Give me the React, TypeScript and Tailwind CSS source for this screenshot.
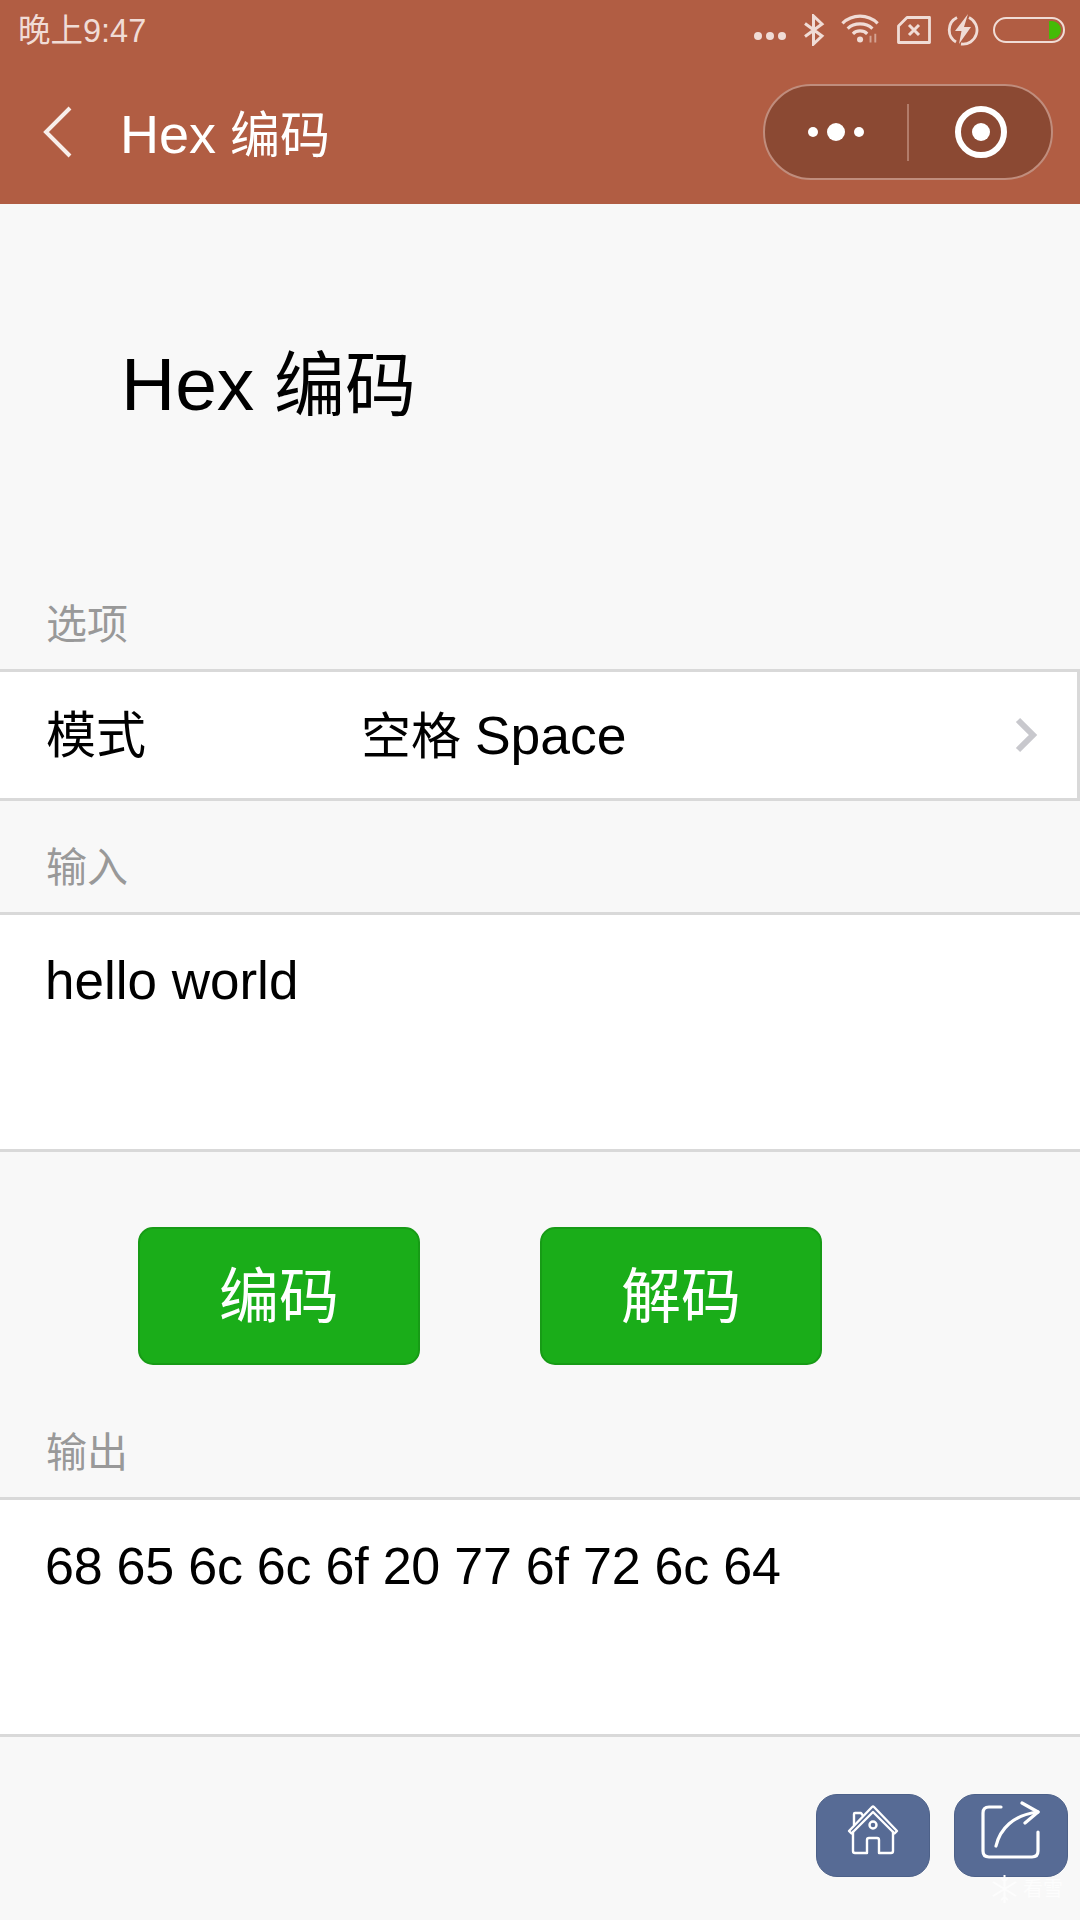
import type { ReactNode } from "react";

const FONT = "font-['Liberation_Sans','Noto_Sans_CJK_SC',sans-serif]";

function StatusIcons() {
	return (
		<div className="flex items-center text-[#f0dcd6]">
			<div className="flex gap-[4px] mt-[11px] mr-[17px]">
				<span className="w-2 h-2 rounded-full bg-[#f0dcd6]" />
				<span className="w-2 h-2 rounded-full bg-[#f0dcd6]" />
				<span className="w-2 h-2 rounded-full bg-[#f0dcd6]" />
			</div>
			<svg width="22" height="32" viewBox="0 0 22 32" fill="none" stroke="currentColor" strokeWidth="3" className="mr-[16px]">
				<path d="M2 9.5 L19 22 L10.5 30 V2 L19 10 L2 22.5" />
			</svg>
			<svg width="40" height="32" viewBox="0 0 42 32" fill="none" stroke="currentColor" className="mr-[16px]">
				<path d="M1.5 9 C12 -1 28 -1 38.5 9" strokeWidth="3.4" />
				<path d="M7 14.5 C14 8 26 8 33 14.5" strokeWidth="3.4" />
				<path d="M12.5 20 C16.5 16 23.5 16 27.5 20" strokeWidth="3.4" />
				<circle cx="20" cy="26" r="3.2" fill="currentColor" stroke="none" />
				<path d="M31 22 V29 M36 20 V29" strokeWidth="2" opacity="0.55" />
			</svg>
			<svg width="34" height="28" viewBox="0 0 34 28" fill="none" stroke="currentColor" strokeWidth="2.8" className="mr-[16px]">
				<path d="M10 1.5 H32.5 V26.5 H1.5 V10 Z" strokeLinejoin="round" />
				<path d="M12 9 L22 19 M22 9 L12 19" strokeWidth="3" />
			</svg>
			<svg width="32" height="32" viewBox="0 0 32 32" fill="none" className="mr-[14px]">
				<path d="M10 3.5 A14 14 0 0 0 9 28 M22 3.5 A14 14 0 0 1 14 30" stroke="currentColor" strokeWidth="2.8" />
				<path d="M21 0 L8 17 H14.5 L12 30 L24 13 H17 Z" fill="currentColor" />
			</svg>
			<div className="relative w-[72px] h-[26px] rounded-[13px] border-[2px] border-[#f0dcd6] overflow-hidden">
				<div className="absolute right-[2px] top-[2px] w-3 h-[18px] rounded-r-[9px] bg-[#45bb07]" />
			</div>
		</div>
	);
}

function Capsule() {
	return (
		<div className="flex items-center w-[290px] h-[96px] rounded-[48px] bg-[#8b4933] border-[2px] border-[#c08d7d]">
			<div className="flex flex-1 items-center justify-center gap-[9px] pr-[1px]">
				<span className="w-[10px] h-[10px] rounded-full bg-white" />
				<span className="w-[18px] h-[18px] rounded-full bg-white" />
				<span className="w-[10px] h-[10px] rounded-full bg-white" />
			</div>
			<div className="w-[2px] h-[57px] bg-[#b27c6a]" />
			<div className="flex flex-1 items-center justify-center pl-[1px]">
				<div className="flex items-center justify-center w-[52px] h-[52px] rounded-full border-[6px] border-white">
					<span className="w-[18px] h-[18px] rounded-full bg-white" />
				</div>
			</div>
		</div>
	);
}

function Header() {
	return (
		<div className="h-[204px] bg-[#b15d43] shrink-0">
			<div className="flex items-center justify-between h-[60px] pl-[18px] pr-[15px]">
				<span className="pt-[2px] text-[32.5px] leading-none text-[#f0dcd6]">晚上9:47</span>
				<StatusIcons />
			</div>
			<div className="flex items-center h-[144px] pl-[43px] pr-[27px]">
				<svg width="30" height="52" viewBox="0 0 30 52" fill="none" stroke="#f8eeea" strokeWidth="4" className="mr-[47px]">
					<path d="M27 2 L3 26 L27 50" />
				</svg>
				<span className="pt-[3px] text-[50px] leading-none text-white">
					<span className="text-[54px]">Hex</span> 编码
				</span>
				<div className="flex-1" />
				<Capsule />
			</div>
		</div>
	);
}

type SectionProps = {
	label: string;
	children: ReactNode;
};

function Section({ label, children }: SectionProps) {
	return (
		<div>
			<p className="pl-[46px] h-[58px] text-[41px] leading-[28px] text-[#999999]">{label}</p>
			{children}
		</div>
	);
}

function TextBlock({ value, className }: { value: string; className: string }) {
	return (
		<div className={`h-[240px] bg-white border-y-[3px] border-[#d9d9d9] px-[45px] pt-[36px] leading-[60px] text-black ${className}`}>
			{value}
		</div>
	);
}

function ActionButton({ text }: { text: string }) {
	return (
		<button className="flex items-center justify-center w-[282px] h-[138px] pt-[3px] rounded-[15px] bg-[#1aad19] border-[2px] border-[#179b16] text-[60px] text-white">
			{text}
		</button>
	);
}

function FloatButton({ children }: { children: ReactNode }) {
	return (
		<div className="flex items-center justify-center w-[114px] h-[83px] pb-[12px] rounded-[21px] bg-[#576b95] border border-[#4d6189]">
			{children}
		</div>
	);
}

export default function App() {
	return (
		<div className={`relative flex flex-col w-[1080px] h-[1920px] overflow-hidden bg-[#f8f8f8] ${FONT}`}>
			<Header />
			<div className="h-[264px] pl-[121px] pt-[138px] shrink-0">
				<h1 className="text-[71px] leading-[84px] text-black">
					<span className="text-[75px]">Hex</span> 编码
				</h1>
			</div>
			<div className="mt-[143px]">
				<Section label="选项">
					<div className="flex items-center h-[132px] bg-white border-y-[3px] border-r-[3px] border-[#d9d9d9] pl-[46px] pr-[39px] pt-[2px] text-[50px] text-black">
						<span className="w-[315px]">模式</span>
						<span className="flex-1">
							空格 <span className="text-[53.5px]">Space</span>
						</span>
						<svg width="24" height="36" viewBox="0 0 24 36" fill="none" stroke="#c8c8cd" strokeWidth="6" className="-mt-[2px]">
							<path d="M4 3 L19 18 L4 33" />
						</svg>
					</div>
				</Section>
			</div>
			<div className="mt-[53px]">
				<Section label="输入">
					<TextBlock value="hello world" className="text-[53px]" />
				</Section>
			</div>
			<div className="flex gap-[120px] pl-[138px] mt-[75px]">
				<ActionButton text="编码" />
				<ActionButton text="解码" />
			</div>
			<div className="mt-[74px]">
				<Section label="输出">
					<TextBlock value="68 65 6c 6c 6f 20 77 6f 72 6c 64" className="text-[52px] tracking-[-0.23px]" />
				</Section>
			</div>
			<div className="flex justify-end gap-[24px] pr-[12px] mt-[57px]">
				<FloatButton>
					<svg width="52" height="52" viewBox="0 0 52 52" fill="none" stroke="white" strokeWidth="2.4" strokeLinejoin="round" strokeLinecap="round">
						<path d="M2 27 L25 3 Q26 2 27 3 L50 27 L47.5 29.5 L26 8 L4.5 29.5 Z" />
						<path d="M7 21 V10 Q7 9 8 9 H14 L15.5 11" />
						<path d="M6 28 V47 Q6 49 8 49 H20 V36 Q20 34 22 34 H30 Q32 34 32 36 V49 H44 Q46 49 46 47 V28" />
						<circle cx="26" cy="21" r="3.5" />
					</svg>
				</FloatButton>
				<FloatButton>
					<svg width="60" height="58" viewBox="0 0 60 58" fill="none" stroke="white" strokeWidth="3.2" strokeLinecap="round" strokeLinejoin="round">
						<path d="M20 6 H8 Q2 6 2 12 V50 Q2 56 8 56 H51 Q57 56 57 50 V31" />
						<path d="M15 45 C19 28 32 14 57 11" />
						<path d="M41 2 L57 11 L44 22" />
					</svg>
				</FloatButton>
			</div>
			{/* faint watermark over the corner */}
			<div className="absolute left-[992px] top-[1875px] flex items-center gap-[6px] text-[#fdfdfd]">
				<svg width="25" height="28" viewBox="0 0 25 28" fill="none" stroke="currentColor" strokeWidth="2">
					<path d="M12.5 0 V28 M1 7 L24 21 M24 7 L1 21" />
					<path d="M9 3 L12.5 6 L16 3 M9 25 L12.5 22 L16 25" />
				</svg>
				<span className="text-[20px] leading-none">看雪</span>
			</div>
		</div>
	);
}
